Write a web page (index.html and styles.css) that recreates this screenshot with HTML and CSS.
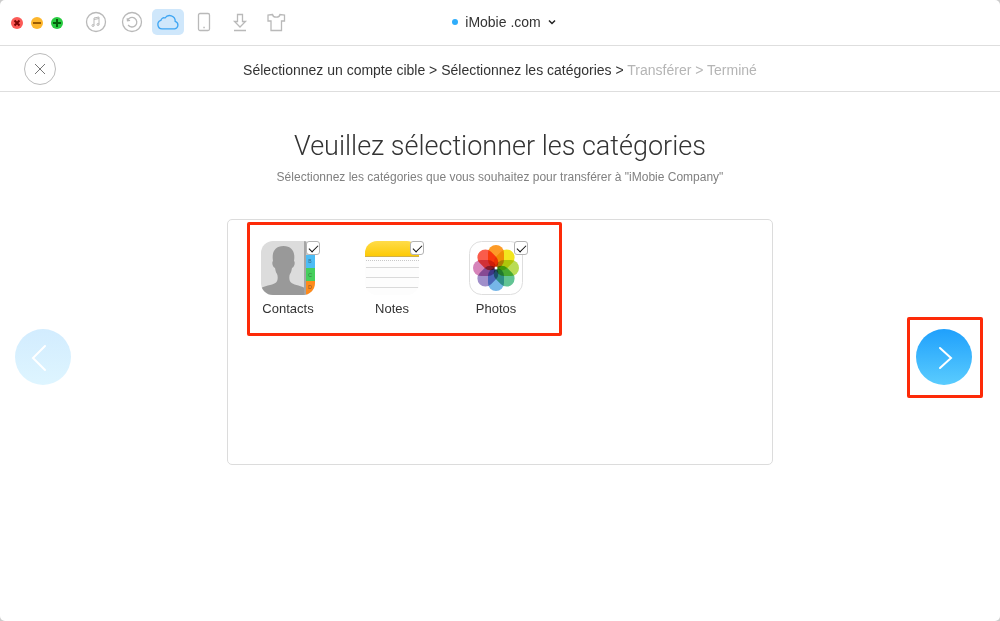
FILE: index.html
```
<!DOCTYPE html>
<html lang="fr">
<head>
<meta charset="utf-8" />
<title>iMobie .com</title>
<meta name="viewport" content="width=device-width, initial-scale=1.0" />
<link rel="stylesheet" href="styles.css">
</head>
<body>
<div class="window">

<header class="titlebar">
  <div class="lights">
    <button class="light close" aria-label="Fermer"><svg viewBox="0 0 12 12"><path d="M3.5 3.5l5 5M8.5 3.5l-5 5" /></svg></button>
    <button class="light minimize" aria-label="Réduire"><svg viewBox="0 0 12 12"><path d="M2 6h8" /></svg></button>
    <button class="light expand" aria-label="Agrandir"><svg viewBox="0 0 12 12"><path d="M2 6h8M6 2v8" /></svg></button>
  </div>
  <nav class="tools">
    <button class="tool" aria-label="Musique"><svg viewBox="0 0 22 22"><circle cx="11" cy="11" r="9.5" /><path class="thin" d="M9 14.500V7l5-1v7.500M9 8.500l5-1" /><ellipse class="thin" cx="8" cy="14.500" rx="1" ry="1" /><ellipse class="thin" cx="13" cy="13.500" rx="1" ry="1" /></svg></button>
    <button class="tool" aria-label="Sauvegardes"><svg viewBox="0 0 22 22"><circle cx="11" cy="11" r="9.5" /><path d="M6.500 9.500a4.800 4.800 0 1 1 .6 4.500M6.200 7.200l.3 2.600 2.600-.5" /></svg></button>
    <button class="tool active" aria-label="iCloud"><svg class="cloud" viewBox="0 0 24 18"><path d="M6 15.800a4.300 4.300 0 0 1-1.100-8.400A3 3 0 0 1 9 5a5.600 5.600 0 0 1 10.200 3.400A3.800 3.800 0 0 1 18.700 15.800z" /></svg></button>
    <button class="tool" aria-label="Appareil"><svg viewBox="0 0 22 22"><rect x="5.500" y="2.500" width="11" height="17" rx="1.500" /><path d="M10.300 16.500h1.500" /></svg></button>
    <button class="tool" aria-label="Télécharger"><svg viewBox="0 0 22 22"><path d="M8.500 3.500h5v7h3L11 16l-5.500-5.500h3zM5 19.500h12" /></svg></button>
    <button class="tool" aria-label="Personnaliser"><svg viewBox="0 0 22 22"><path d="M7.500 3.500l-4.500.5v6h3v9.500h10.500V10h3V4l-4.500-.5c-.8 3.600-6.700 3.600-7.500 0z" /></svg></button>
  </nav>
  <button class="account"><span class="dot"></span>iMobie .com<svg viewBox="0 0 8 6"><path d="M1 1.500l3 3 3-3" /></svg></button>
</header>

<div class="steps">
  <button class="cancel" aria-label="Annuler"><svg viewBox="0 0 12 12"><path d="M1 1l10 10M11 1L1 11" /></svg></button>
  <p class="trail">Sélectionnez un compte cible &gt; Sélectionnez les catégories &gt; <span class="todo">Transférer &gt; Terminé</span></p>
</div>

<main class="main">
  <div class="prev">
    <button class="arrow" disabled aria-label="Précédent"><svg viewBox="0 0 56 56"><path d="M30 17L18 29l12 12" /></svg></button>
  </div>

  <section class="content">
    <h1>Veuillez sélectionner les catégories</h1>
    <p class="hint">Sélectionnez les catégories que vous souhaitez pour transférer à "iMobie Company"</p>

    <div class="panel">
      <div class="categories">
        <label class="category">
          <span class="icon">
            <svg viewBox="0 0 54 54">
              <defs><clipPath id="contacts-shape"><rect width="54" height="54" rx="12" /></clipPath></defs>
              <g clip-path="url(#contacts-shape)">
                <rect width="54" height="54" fill="#dcdcdc" />
                <path d="M0 54v-7c6-3 13-3 15.500-6 1.500-2 1.500-6 .5-8-1.500-2-1.500-4-2-6-2.500-1-3.500-6-2-7C10.500 11 14 5 22.500 5S34.500 11 33 20c1.500 1 .5 6-2 7-.5 2-.5 4-2 6-1 2-1 6 .5 8 2.500 3 8.500 3 14.500 6v7z" fill="#999" />
                <path d="M43 0h2v54h-2z" fill="#a5a5a5" />
                <path d="M45 0h9v14h-9z" fill="#c8c8c8" />
                <path d="M45 14h9v13h-9z" fill="#4cbcf5" />
                <path d="M45 27h9v13h-9z" fill="#46cf5d" />
                <path d="M45 40h9v14h-9z" fill="#ff8b1c" />
                <g class="tab-letters"><text x="49" y="22">B</text><text x="49" y="36">C</text><text x="49" y="48">D</text></g>
              </g>
            </svg>
            <input type="checkbox" checked>
          </span>
          Contacts
        </label>
        <label class="category">
          <span class="icon">
            <svg viewBox="0 0 54 54">
              <defs>
                <clipPath id="notes-shape"><rect width="54" height="54" rx="12" /></clipPath>
                <linearGradient id="notes-top" x2="0" y2="1"><stop stop-color="#ffdc4a" /><stop offset="1" stop-color="#fdca05" /></linearGradient>
              </defs>
              <g clip-path="url(#notes-shape)">
                <rect width="54" height="54" fill="#fdfdfd" />
                <rect width="54" height="15" fill="url(#notes-top)" />
                <path d="M0 15.500h54" stroke="#d0b04a" />
                <path d="M1 19.500h53" stroke="#c8c8c8" stroke-dasharray="1 1" />
                <path d="M1 26.500h53M1 36.500h53M1 46.500h53" stroke="#dadada" />
              </g>
            </svg>
            <input type="checkbox" checked>
          </span>
          Notes
        </label>
        <label class="category">
          <span class="icon">
            <svg viewBox="0 0 54 54">
              <rect x=".5" y=".5" width="53" height="53" rx="12" fill="#fff" stroke="#dedede" />
              <g class="petals">
                <rect x="19" y="4" width="16" height="23" rx="8" fill="#fd9b27" />
                <rect x="19" y="4" width="16" height="23" rx="8" fill="#f2e61f" transform="rotate(45 27 27)" />
                <rect x="19" y="4" width="16" height="23" rx="8" fill="#b9dc55" transform="rotate(90 27 27)" />
                <rect x="19" y="4" width="16" height="23" rx="8" fill="#62c494" transform="rotate(135 27 27)" />
                <rect x="19" y="4" width="16" height="23" rx="8" fill="#76b6e8" transform="rotate(180 27 27)" />
                <rect x="19" y="4" width="16" height="23" rx="8" fill="#a08fca" transform="rotate(225 27 27)" />
                <rect x="19" y="4" width="16" height="23" rx="8" fill="#d684ba" transform="rotate(270 27 27)" />
                <rect x="19" y="4" width="16" height="23" rx="8" fill="#fa5c4b" transform="rotate(315 27 27)" />
              </g>
              <circle cx="27" cy="27" r="1.500" fill="#fff" />
            </svg>
            <input type="checkbox" checked>
          </span>
          Photos
        </label>
      </div>
    </div>
  </section>

  <div class="next">
    <button class="arrow" aria-label="Suivant"><svg viewBox="0 0 56 56"><path d="M24 19l11 10-11 10" /></svg></button>
  </div>
</main>

</div>
</body>
</html>
```

FILE: styles.css
```
* {
  box-sizing: border-box;
}

body {
  margin: 0;
  background: #ccc;
  color: #333;
  font-family: "Liberation Sans", Arial, sans-serif;
  font-size: 14px;
}

h1, p {
  margin: 0;
}

button {
  padding: 0;
  border: 0;
  background: none;
  color: inherit;
  font: inherit;
}

svg {
  display: block;
  fill: none;
}

.window {
  display: flex;
  flex-direction: column;
  min-height: 100vh;
  background: #fff;
  border-radius: 5px;
}

/* title bar */
.titlebar {
  display: grid;
  grid-template-columns: 1fr auto 1fr;
  align-items: center;
  height: 46px;
  padding: 0 11px;
  border-bottom: 1px solid #dedede;
}

.lights {
  grid-area: 1 / 1;
  display: flex;
  gap: 8px;
}

.light {
  width: 12px;
  height: 12px;
  border-radius: 50%;
}

.light svg {
  stroke-width: 2;
}

.close {
  background: #fc5b57;
  stroke: #7c0504;
}

.minimize {
  background: #fdb62c;
  stroke: #9a5c05;
}

.expand {
  background: #28cb40;
  stroke: #045f0b;
}

.tools {
  grid-area: 1 / 1;
  display: flex;
  gap: 4px;
  margin-left: 69px;
  padding-bottom: 2px;
}

.tool {
  display: grid;
  place-items: center;
  width: 32px;
  height: 26px;
  border-radius: 5px;
  stroke: #b9b9b9;
  stroke-width: 1.3;
}

.tool svg {
  width: 22px;
  height: 22px;
}

.tool .cloud {
  width: 24px;
  height: 18px;
}

.thin {
  stroke-width: 1;
}

.active {
  background: #cfe7fb;
  stroke: #3da5f3;
}

.account {
  grid-area: 1 / 2;
  display: flex;
  align-items: center;
  gap: 7px;
  padding: 0 0 2px 8px;
}

.account svg {
  width: 8px;
  height: 6px;
  stroke: #222;
  stroke-width: 1.5;
}

.dot {
  width: 6px;
  height: 6px;
  border-radius: 50%;
  background: #2fadfb;
}

/* steps */
.steps {
  display: grid;
  grid-template-columns: 1fr auto 1fr;
  align-items: center;
  height: 46px;
  padding: 0 24px;
  border-bottom: 1px solid #dedede;
}

.cancel {
  display: grid;
  place-items: center;
  width: 32px;
  height: 32px;
  border: 1px solid #bbb;
  border-radius: 50%;
  stroke: #777;
}

.cancel svg {
  width: 12px;
  height: 12px;
}

.trail {
  padding-top: 2px;
  line-height: 20px;
}

.todo {
  color: #b5b5b5;
}

/* content */
.main {
  flex: 1;
  display: grid;
  grid-template-columns: 1fr minmax(0, 546px) 1fr;
}

.content {
  padding-top: 36px;
  text-align: center;
}

h1 {
  font-family: Roboto, "Liberation Sans", sans-serif;
  font-size: 27px;
  font-weight: 300;
  line-height: 36px;
}

.hint {
  margin-top: 4px;
  color: #808080;
  font-size: 12px;
  line-height: 18px;
}

.panel {
  min-height: 246px;
  margin-top: 33px;
  padding: 2px 19px;
  border: 1px solid #dcdcdc;
  border-radius: 5px;
}

.categories {
  display: flex;
  gap: 28px;
  width: fit-content;
  padding: 16px 25px 14px 0;
  border: 3px solid #fd2a08;
  border-radius: 2px;
}

.category {
  width: 76px;
  font-size: 13px;
  line-height: 20px;
}

.icon {
  position: relative;
  display: block;
  width: 54px;
  height: 54px;
  margin: 0 auto 4px;
}

.tab-letters {
  fill: #333;
  font-size: 5px;
  opacity: 0.6;
  text-anchor: middle;
}

.petals {
  isolation: isolate;
}

.petals rect {
  mix-blend-mode: multiply;
}

.icon input {
  position: absolute;
  top: 0;
  right: -5px;
  display: grid;
  justify-content: center;
  width: 14px;
  height: 14px;
  margin: 0;
  padding-top: 3px;
  border: 1px solid #b4b4b4;
  border-radius: 3px;
  background: #fff;
  appearance: none;
}

.icon input:checked::after {
  content: "";
  width: 8px;
  height: 4px;
  border: solid #111;
  border-width: 0 0 1px 1px;
  transform: rotate(-45deg);
}

/* arrows */
.prev, .next {
  align-self: center;
}

.prev {
  margin-left: 15px;
}

.next {
  justify-self: end;
  margin: 2px 17px 0 0;
  padding: 9px 8px 10px 6px;
  border: 3px solid #fd2a08;
  border-radius: 2px;
}

.arrow {
  display: block;
  width: 56px;
  height: 56px;
  border-radius: 50%;
  background: linear-gradient(#1fa0fc, #5accfe);
  stroke: #fff;
  stroke-width: 2;
  stroke-linecap: round;
}

.arrow:disabled {
  background: linear-gradient(#d2ecfe, #def5ff);
}
```
